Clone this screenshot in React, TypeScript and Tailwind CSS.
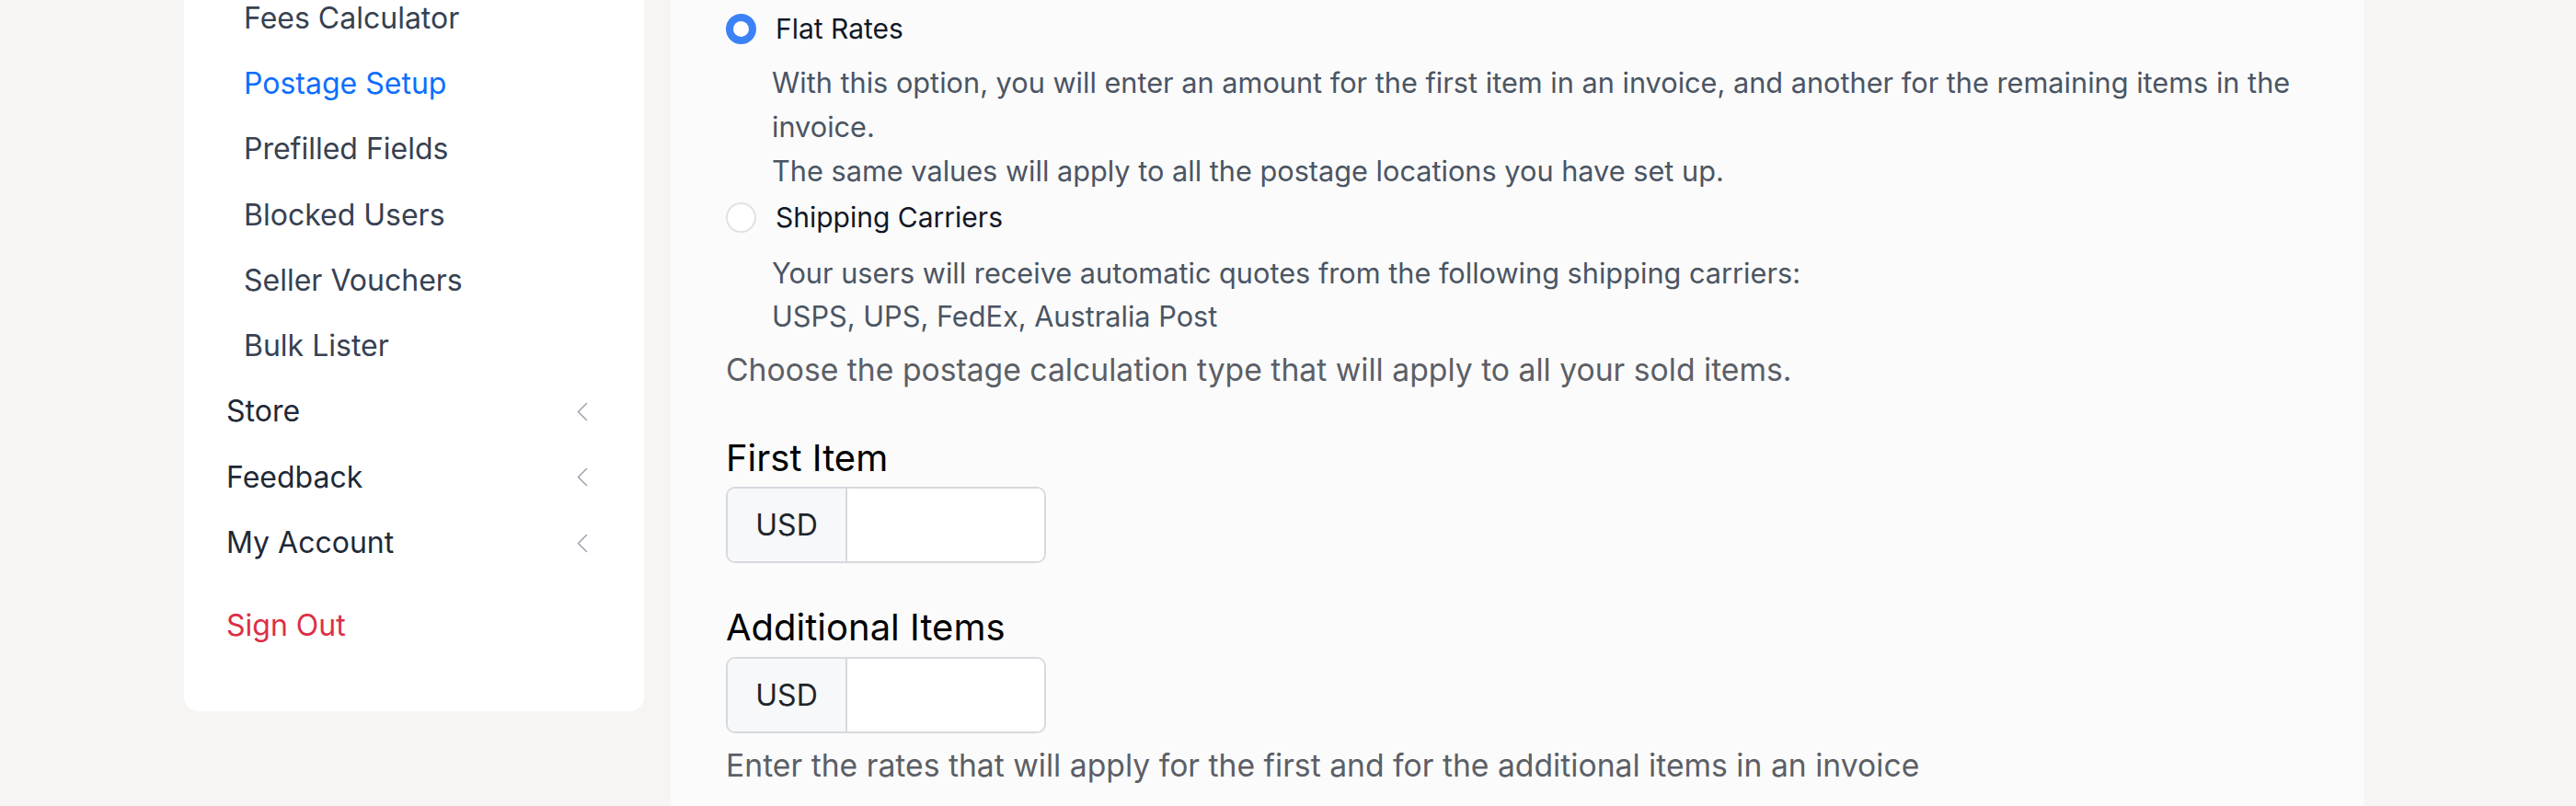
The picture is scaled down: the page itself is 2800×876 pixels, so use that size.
const subItems = [
  { label: 'Fees Calculator' },
  { label: 'Postage Setup', active: true },
  { label: 'Prefilled Fields' },
  { label: 'Blocked Users' },
  { label: 'Seller Vouchers' },
  { label: 'Bulk Lister' },
];

const groups = ['Store', 'Feedback', 'My Account'];

function Chevron() {
  return (
    <svg width="12" height="21" viewBox="0 0 12 21" fill="none" className="shrink-0">
      <path d="M10.5 1.5 1.5 10.5l9 9" stroke="#9ca3af" strokeWidth="1.5" strokeLinecap="round" strokeLinejoin="round" />
    </svg>
  );
}

function Radio({ checked }: { checked?: boolean }) {
  return checked ? (
    <span className="w-[33px] h-[33px] rounded-full border-[8.5px] border-[#3b82f6] bg-white shrink-0" />
  ) : (
    <span className="w-[33px] h-[33px] rounded-full border-2 border-[#dfe2e6] bg-white shrink-0" />
  );
}

function AmountInput() {
  return (
    <div className="flex w-[348px] h-[83px] rounded-[10px] border-2 border-[#d6d9de] overflow-hidden">
      <span className="w-[130px] flex items-center justify-center bg-[#f7f8fa] border-r-2 border-[#d6d9de] text-[32px] text-[#212529]">
        USD
      </span>
      <input className="flex-1 min-w-0 bg-white outline-none px-4 text-[32px]" />
    </div>
  );
}

export default function App() {
  return (
    <div className="flex h-[876px] w-full overflow-hidden bg-[#f6f5f4] font-['Inter',sans-serif]">
      {/* Sidebar */}
      <aside className="ml-[200px] w-[500px] self-start -mt-[16px] pb-[57px] bg-white rounded-b-[16px] shrink-0">
        {subItems.map((item) => (
          <div
            key={item.label}
            className={
              'h-[71.3px] flex items-center pl-[65px] text-[32px] ' +
              (item.active ? 'text-[#0d6efd]' : 'text-[#374151]')
            }
          >
            {item.label}
          </div>
        ))}
        {groups.map((g) => (
          <div key={g} className="h-[71.3px] flex items-center justify-between pl-[46px] pr-[61px] text-[32px] text-[#1f2937]">
            <span>{g}</span>
            <Chevron />
          </div>
        ))}
        <div className="mt-[19px] h-[71px] flex items-center pl-[46px] text-[32px] text-[#dc2f45]">
          Sign Out
        </div>
      </aside>

      {/* Main panel */}
      <main className="ml-[29px] w-[1841px] h-full bg-[#fbfbfb] px-[60px] pt-[7px] shrink-0">
        <div className="flex items-center gap-[21px] h-[48px]">
          <Radio checked />
          <span className="text-[30px] text-[#111827]">Flat Rates</span>
        </div>
        <div className="mt-[11px] pl-[50px] text-[30.7px] leading-[48px] text-[#4b5563] whitespace-nowrap">
          <p>With this option, you will enter an amount for the first item in an invoice, and another for the remaining items in the</p>
          <p>invoice.</p>
          <p>The same values will apply to all the postage locations you have set up.</p>
        </div>

        <div className="mt-[2px] flex items-center gap-[21px] h-[48px]">
          <Radio />
          <span className="text-[30px] text-[#111827]">Shipping Carriers</span>
        </div>
        <div className="mt-[13px] pl-[50px] text-[30.7px] leading-[47px] text-[#4b5563] whitespace-nowrap">
          <p>Your users will receive automatic quotes from the following shipping carriers:</p>
          <p>USPS, UPS, FedEx, Australia Post</p>
        </div>

        <p className="mt-[11px] text-[33.7px] leading-[48px] text-[#5c5f66]">
          Choose the postage calculation type that will apply to all your sold items.
        </p>

        <h3 className="mt-[48px] text-[40px] leading-[48px] text-black">First Item</h3>
        <div className="mt-[7px]">
          <AmountInput />
        </div>

        <h3 className="mt-[46px] text-[40px] leading-[48px] text-black">Additional Items</h3>
        <div className="mt-[8px]">
          <AmountInput />
        </div>

        <p className="mt-[11px] text-[33.7px] leading-[48px] text-[#5c5f66]">
          Enter the rates that will apply for the first and for the additional items in an invoice
        </p>
      </main>
    </div>
  );
}
